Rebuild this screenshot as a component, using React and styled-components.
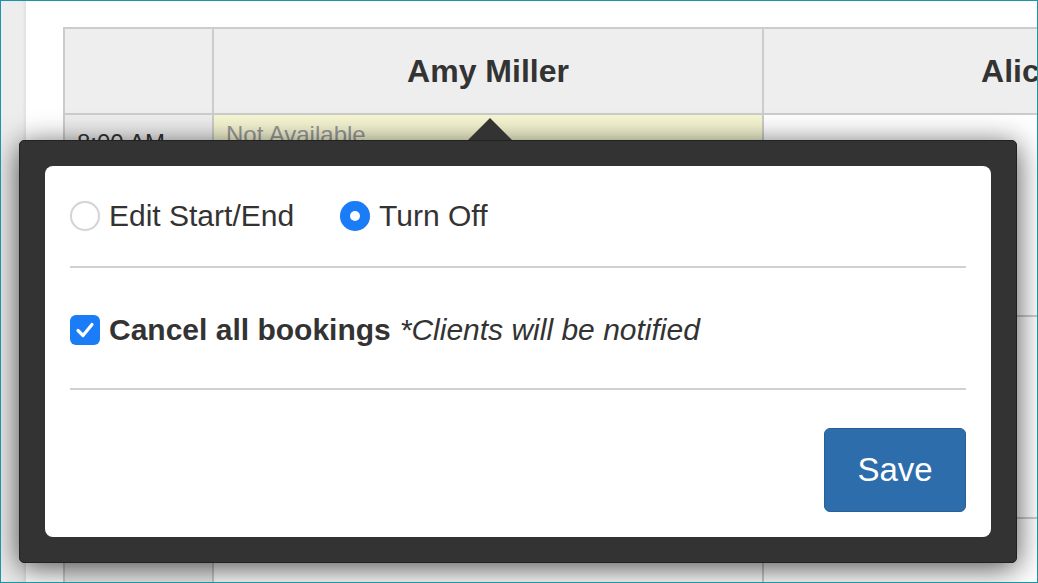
import React from "react";
import styled, { createGlobalStyle } from "styled-components";

const Global = createGlobalStyle`
  html, body { margin: 0; padding: 0; background: #fff; }
  body { font-family: "Liberation Sans", Arial, Helvetica, sans-serif; overflow: hidden; }
  * { box-sizing: border-box; }
`;

const Frame = styled.div`
  position: relative;
  width: 1038px;
  height: 583px;
  border: 1px solid #1a96a7;
  display: flex;
  overflow: hidden;
  background: #fff;
`;

const Sidebar = styled.div`
  flex: none;
  width: 25px;
  background: #ededed;
  box-shadow: inset -2px 0 3px rgba(0, 0, 0, 0.05);
`;

const Main = styled.div`
  flex: 1;
  min-width: 0;
  padding: 26px 0 0 37px;
  overflow: hidden;
`;

const Schedule = styled.div`
  display: grid;
  grid-template-columns: 149px 550px 550px;
  width: max-content;
  border-top: 2px solid #cccccc;
  border-left: 2px solid #cccccc;
`;

const HeaderCell = styled.div`
  height: 86px;
  background: #eeeeee;
  border-right: 2px solid #cccccc;
  border-bottom: 2px solid #cccccc;
  display: flex;
  align-items: center;
  justify-content: center;
  font-size: 32px;
  font-weight: bold;
  color: #333;
  white-space: nowrap;
`;

const TimeCell = styled.div`
  height: 202px;
  background: #eeeeee;
  border-right: 2px solid #cccccc;
  border-bottom: 2px solid #cccccc;
  padding: 14px 12px 0;
  font-size: 24px;
  line-height: 1.2;
  color: #333;
`;

const SlotCell = styled.div`
  height: 202px;
  background: ${(p) => (p.$unavailable ? "#f6f6d3" : "#ffffff")};
  border-right: 2px solid #cccccc;
  border-bottom: 2px solid #cccccc;
  padding: 6px 12px 0;
  font-size: 24px;
  line-height: 1.2;
  color: #999;
`;

const Popover = styled.div`
  position: absolute;
  left: 18px;
  top: 139px;
  width: 998px;
  height: 423px;
  background: #333333;
  border: 1px solid #222;
  border-radius: 5px;
  padding: 25px;
  box-shadow: 0 5px 30px rgba(0, 0, 0, 0.7);

  &::before {
    content: "";
    position: absolute;
    top: -23px;
    left: 448px;
    width: 0;
    height: 0;
    border-left: 22px solid transparent;
    border-right: 22px solid transparent;
    border-bottom: 22px solid #333333;
  }
`;

const Panel = styled.div`
  height: 100%;
  background: #fff;
  border-radius: 8px;
  padding: 25px;
  display: flex;
  flex-direction: column;
  color: #333;
  font-size: 30px;
`;

const OptionRow = styled.div`
  height: 50px;
  display: flex;
  align-items: center;
  margin-top: ${(p) => p.$mt || 0}px;
  white-space: nowrap;
`;

const Option = styled.label`
  display: inline-flex;
  align-items: center;
  gap: 9px;
  margin-right: 46px;
`;

const Radio = styled.span`
  position: relative;
  width: 30px;
  height: 30px;
  border-radius: 50%;
  flex: none;
  background: ${(p) => (p.$checked ? "#1a7cf6" : "#fff")};
  box-shadow: ${(p) =>
    p.$checked
      ? "0 0 1px rgba(0,0,0,0.2)"
      : "inset 0 0 0 2px #d4d4d4, 0 0 1px rgba(0,0,0,0.15)"};

  &::after {
    content: "";
    display: ${(p) => (p.$checked ? "block" : "none")};
    position: absolute;
    left: 10px;
    top: 10px;
    width: 10px;
    height: 10px;
    border-radius: 50%;
    background: #fff;
  }
`;

const Checkbox = styled.span`
  width: 30px;
  height: 30px;
  flex: none;
  border-radius: 6px;
  background: #1a7cf6;
  display: flex;
  align-items: center;
  justify-content: center;
`;

const Strong = styled.span`
  font-weight: bold;
`;

const Note = styled.span`
  font-style: italic;
  margin-left: 9px;
`;

const Divider = styled.div`
  height: 2px;
  background: #d0d0d0;
  margin-top: ${(p) => p.$mt}px;
  flex: none;
`;

const Footer = styled.div`
  display: flex;
  justify-content: flex-end;
  margin-top: 38px;
`;

const SaveButton = styled.button`
  width: 142px;
  height: 84px;
  background: #2e6dab;
  border: 1px solid #285f96;
  border-radius: 6px;
  color: #fff;
  font-family: "Liberation Sans", Arial, sans-serif;
  font-size: 33px;
  padding: 0;
  cursor: pointer;
`;

export default function App() {
  return (
    <>
      <Global />
      <Frame>
        <Sidebar />
        <Main>
          <Schedule>
            <HeaderCell />
            <HeaderCell>Amy Miller</HeaderCell>
            <HeaderCell>Alice Li</HeaderCell>

            <TimeCell>8:00 AM</TimeCell>
            <SlotCell $unavailable>Not Available</SlotCell>
            <SlotCell />

            <TimeCell>8:30 AM</TimeCell>
            <SlotCell />
            <SlotCell />

            <TimeCell>9:00 AM</TimeCell>
            <SlotCell />
            <SlotCell />
          </Schedule>
        </Main>

        <Popover>
          <Panel>
            <OptionRow>
              <Option>
                <Radio />
                Edit Start/End
              </Option>
              <Option>
                <Radio $checked />
                Turn Off
              </Option>
            </OptionRow>
            <Divider $mt={25} />
            <OptionRow $mt={37}>
              <Option>
                <Checkbox>
                  <svg width="24" height="24" viewBox="0 0 24 24">
                    <path
                      d="M5 12.5 L10 17.5 L19 6.5"
                      fill="none"
                      stroke="#fff"
                      strokeWidth="3.2"
                      strokeLinecap="round"
                      strokeLinejoin="round"
                    />
                  </svg>
                </Checkbox>
                <span>
                  <Strong>Cancel all bookings</Strong>
                  <Note>*Clients will be notified</Note>
                </span>
              </Option>
            </OptionRow>
            <Divider $mt={33} />
            <Footer>
              <SaveButton>Save</SaveButton>
            </Footer>
          </Panel>
        </Popover>
      </Frame>
    </>
  );
}
